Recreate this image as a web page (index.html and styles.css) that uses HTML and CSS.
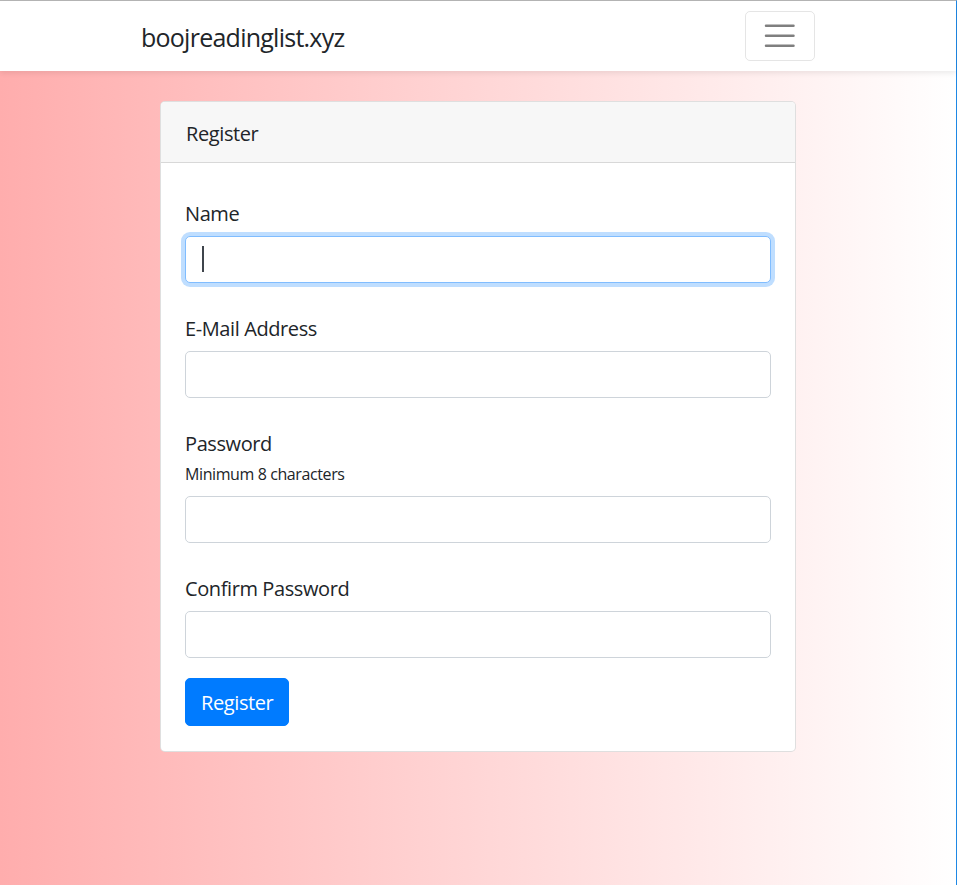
FILE: index.html
```html
<!DOCTYPE html>
<html lang="en">
<head>
<meta charset="utf-8">
<title>boojreadinglist.xyz</title>
<link rel="stylesheet" href="styles.css">
</head>
<body>
<div class="frame">
  <nav class="navbar">
    <div class="nav-inner">
      <a class="brand" href="#">boojreadinglist.xyz</a>
      <button class="toggler" type="button" aria-label="Toggle navigation">
        <svg class="toggler-icon" viewBox="0 0 30 30" width="37.5" height="37.5" aria-hidden="true">
          <path d="M4 7h22M4 15h22M4 23h22" stroke="rgba(0,0,0,0.5)" stroke-width="2" stroke-linecap="round" stroke-miterlimit="10" fill="none"/>
        </svg>
      </button>
    </div>
  </nav>
  <main class="main">
    <div class="card">
      <div class="card-header">Register</div>
      <div class="card-body">
        <form class="form">
          <div class="group">
            <label class="label" for="name">Name</label>
            <div class="input-wrap">
              <input id="name" class="input input-focus" type="text">
              <span class="caret"></span>
            </div>
          </div>
          <div class="group">
            <label class="label" for="email">E-Mail Address</label>
            <input id="email" class="input" type="email">
          </div>
          <div class="group">
            <label class="label label-tight" for="password">Password</label>
            <small class="hint">Minimum 8 characters</small>
            <input id="password" class="input" type="password">
          </div>
          <div class="group">
            <label class="label" for="confirm">Confirm Password</label>
            <input id="confirm" class="input" type="password">
          </div>
          <div class="actions">
            <button class="btn" type="button">Register</button>
          </div>
        </form>
      </div>
    </div>
  </main>
</div>
</body>
</html>
```
FILE: styles.css
```css
html, body {
  margin: 0;
  padding: 0;
}
body {
  font-family: "Open Sans", "Noto Sans", sans-serif;
  font-size: 20px;
  line-height: 1.5;
  letter-spacing: -0.02em;
  color: #212529;
}
.frame {
  box-sizing: border-box;
  min-height: 100vh;
  border-top: 1px solid #b4b4b4;
  border-right: 1px solid #1e88e5;
  background: linear-gradient(to right, #ffadad 0%, #ffffff 100%);
}
.navbar {
  background: #fff;
  padding: 10px 20px;
  box-shadow: 0 2.5px 5px rgba(0, 0, 0, 0.075);
  position: relative;
}
.nav-inner {
  width: 674px;
  margin: 0 auto;
  display: flex;
  align-items: center;
  justify-content: space-between;
}
.brand {
  font-size: 25px;
  line-height: 37.5px;
  letter-spacing: -0.03em;
  padding-top: 3px;
  color: #212529;
  text-decoration: none;
}
.toggler {
  box-sizing: border-box;
  width: 70px;
  height: 50px;
  padding: 5px 15px;
  background: transparent;
  border: 1px solid rgba(0, 0, 0, 0.1);
  border-radius: 5px;
  display: flex;
  align-items: center;
  justify-content: center;
}
.toggler-icon {
  display: block;
}
.main {
  padding: 30px 0;
}
.card {
  box-sizing: border-box;
  width: 636px;
  margin: 0 auto;
  background: #fff;
  border: 1px solid rgba(0, 0, 0, 0.125);
  border-radius: 5px;
  overflow: hidden;
}
.card-header {
  padding: 17px 25px 13px;
  line-height: 30px;
  background: #f7f7f7;
  border-bottom: 1px solid rgba(0, 0, 0, 0.125);
}
.card-body {
  padding: 25px 24px;
}
.group {
  margin-bottom: 20px;
}
.label {
  display: block;
  padding: 10.5px 0 7px;
  line-height: 30px;
}
.label-tight {
  padding-bottom: 0;
}
.hint {
  display: block;
  font-size: 16px;
  line-height: 24px;
  margin: 3px 0 10px;
}
.input-wrap {
  position: relative;
}
.input {
  box-sizing: border-box;
  display: block;
  width: 100%;
  height: 47.5px;
  padding: 7.5px 15px;
  font: inherit;
  letter-spacing: inherit;
  color: #495057;
  background: #fff;
  border: 1px solid #ced4da;
  border-radius: 5px;
  outline: none;
  caret-color: transparent;
}
.input-focus {
  border-color: #80bdff;
  box-shadow: 0 0 0 4px rgba(0, 123, 255, 0.25);
}
.caret {
  position: absolute;
  left: 17px;
  top: 10px;
  width: 2px;
  height: 26px;
  background: #3f454c;
}
.actions {
  display: flex;
}
.btn {
  font: inherit;
  letter-spacing: inherit;
  color: #fff;
  background: #007bff;
  border: 1px solid #007bff;
  border-radius: 5px;
  padding: 9px 15px 6px;
  line-height: 30px;
  height: 47.5px;
}
```
